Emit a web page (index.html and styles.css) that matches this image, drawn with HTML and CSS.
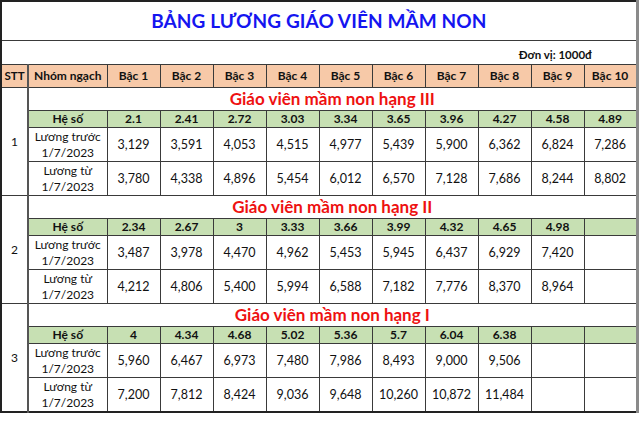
FILE: index.html
```html
<!DOCTYPE html>
<html lang="vi">
<head>
<meta charset="utf-8">
<link rel="stylesheet" href="styles.css">
</head>
<body>
<table class="sheet">
  <colgroup>
    <col class="c-stt"><col class="c-name">
    <col class="c-b"><col class="c-b"><col class="c-b"><col class="c-b"><col class="c-b">
    <col class="c-b"><col class="c-b"><col class="c-b"><col class="c-b"><col class="c-b">
  </colgroup>
  <tr class="r-title"><td colspan="12" class="title">BẢNG LƯƠNG GIÁO VIÊN MẦM NON</td></tr>
  <tr class="r-unit"><td colspan="12" class="unit">Đơn vị: 1000đ</td></tr>
  <tr class="r-head">
    <th class="stt-h">STT</th><th class="name-h">Nhóm ngạch</th>
    <th>Bậc 1</th><th>Bậc 2</th><th>Bậc 3</th><th>Bậc 4</th><th>Bậc 5</th>
    <th>Bậc 6</th><th>Bậc 7</th><th>Bậc 8</th><th>Bậc 9</th><th class="last">Bậc 10</th>
  </tr>

  <tr class="r-group"><td rowspan="4" class="stt">1</td><td colspan="11" class="gname">Giáo viên mầm non hạng III</td></tr>
  <tr class="r-coef"><td class="name">Hệ số</td><td>2.1</td><td>2.41</td><td>2.72</td><td>3.03</td><td>3.34</td><td>3.65</td><td>3.96</td><td>4.27</td><td>4.58</td><td class="last">4.89</td></tr>
  <tr class="r-val"><td class="name">Lương trước<br>1/7/2023</td><td>3,129</td><td>3,591</td><td>4,053</td><td>4,515</td><td>4,977</td><td>5,439</td><td>5,900</td><td>6,362</td><td>6,824</td><td class="last">7,286</td></tr>
  <tr class="r-val"><td class="name">Lương từ<br>1/7/2023</td><td>3,780</td><td>4,338</td><td>4,896</td><td>5,454</td><td>6,012</td><td>6,570</td><td>7,128</td><td>7,686</td><td>8,244</td><td class="last">8,802</td></tr>

  <tr class="r-group"><td rowspan="4" class="stt">2</td><td colspan="11" class="gname">Giáo viên mầm non hạng II</td></tr>
  <tr class="r-coef"><td class="name">Hệ số</td><td>2.34</td><td>2.67</td><td>3</td><td>3.33</td><td>3.66</td><td>3.99</td><td>4.32</td><td>4.65</td><td>4.98</td><td class="last"></td></tr>
  <tr class="r-val"><td class="name">Lương trước<br>1/7/2023</td><td>3,487</td><td>3,978</td><td>4,470</td><td>4,962</td><td>5,453</td><td>5,945</td><td>6,437</td><td>6,929</td><td>7,420</td><td class="last"></td></tr>
  <tr class="r-val"><td class="name">Lương từ<br>1/7/2023</td><td>4,212</td><td>4,806</td><td>5,400</td><td>5,994</td><td>6,588</td><td>7,182</td><td>7,776</td><td>8,370</td><td>8,964</td><td class="last"></td></tr>

  <tr class="r-group"><td rowspan="4" class="stt">3</td><td colspan="11" class="gname">Giáo viên mầm non hạng I</td></tr>
  <tr class="r-coef"><td class="name">Hệ số</td><td>4</td><td>4.34</td><td>4.68</td><td>5.02</td><td>5.36</td><td>5.7</td><td>6.04</td><td>6.38</td><td></td><td class="last"></td></tr>
  <tr class="r-val"><td class="name">Lương trước<br>1/7/2023</td><td>5,960</td><td>6,467</td><td>6,973</td><td>7,480</td><td>7,986</td><td>8,493</td><td>9,000</td><td>9,506</td><td></td><td class="last"></td></tr>
  <tr class="r-val r-end"><td class="name">Lương từ<br>1/7/2023</td><td>7,200</td><td>7,812</td><td>8,424</td><td>9,036</td><td>9,648</td><td>10,260</td><td>10,872</td><td>11,484</td><td></td><td class="last"></td></tr>
</table>
</body>
</html>
```
FILE: styles.css
```css
html, body {
  margin: 0;
  padding: 0;
  background: #ffffff;
}
body {
  font-family: Lato, "Noto Sans", "Liberation Sans", sans-serif;
  color: #111;
}
.sheet {
  border-collapse: collapse;
  table-layout: fixed;
  width: 637px;
  border-top: 2px solid #222;
  border-left: 2px solid #222;
  border-bottom: 2px solid #222;
  border-right: 3px solid #8a8a8a;
}
.c-stt { width: 27px; }
.c-name { width: 79px; }
.c-b { width: 53px; }

td, th {
  padding: 0;
  text-align: center;
  vertical-align: middle;
  font-size: 12.5px;
  line-height: 16px;
  border: 1px solid #3a3a3a;
  overflow: hidden;
  white-space: nowrap;
}

.r-title td { height: 38px; }
.title {
  font-size: 19px;
  font-weight: 700;
  color: #1515f0;
  letter-spacing: 0.1px;
}
.r-unit td { height: 22px; }
.unit {
  text-align: right;
  font-size: 11.5px;
  font-weight: 700;
  padding-right: 44px;
  vertical-align: bottom;
  padding-bottom: 1px;
}
.r-head th {
  height: 22px;
  background: #f7c9a8;
  font-weight: 700;
  font-size: 12px;
}
.r-head th.stt-h { font-size: 11.5px; border-right: 2px solid #555; }

.stt {
  font-size: 12px;
  border-right: 2px solid #555;
}
.r-group td.gname {
  height: 22px;
  color: #ee1111;
  font-weight: 700;
  font-size: 17px;
  border-bottom: 1px solid #3a3a3a;
}
.r-coef td {
  height: 16px;
  background: #c7e0b3;
  font-weight: 700;
  font-size: 12px;
  line-height: 14px;
}
.r-val td {
  height: 33px;
}
.r-val td.name {
  font-size: 12px;
  line-height: 16px;
  white-space: normal;
}
.last { border-right: 3px solid #8a8a8a; }
```
